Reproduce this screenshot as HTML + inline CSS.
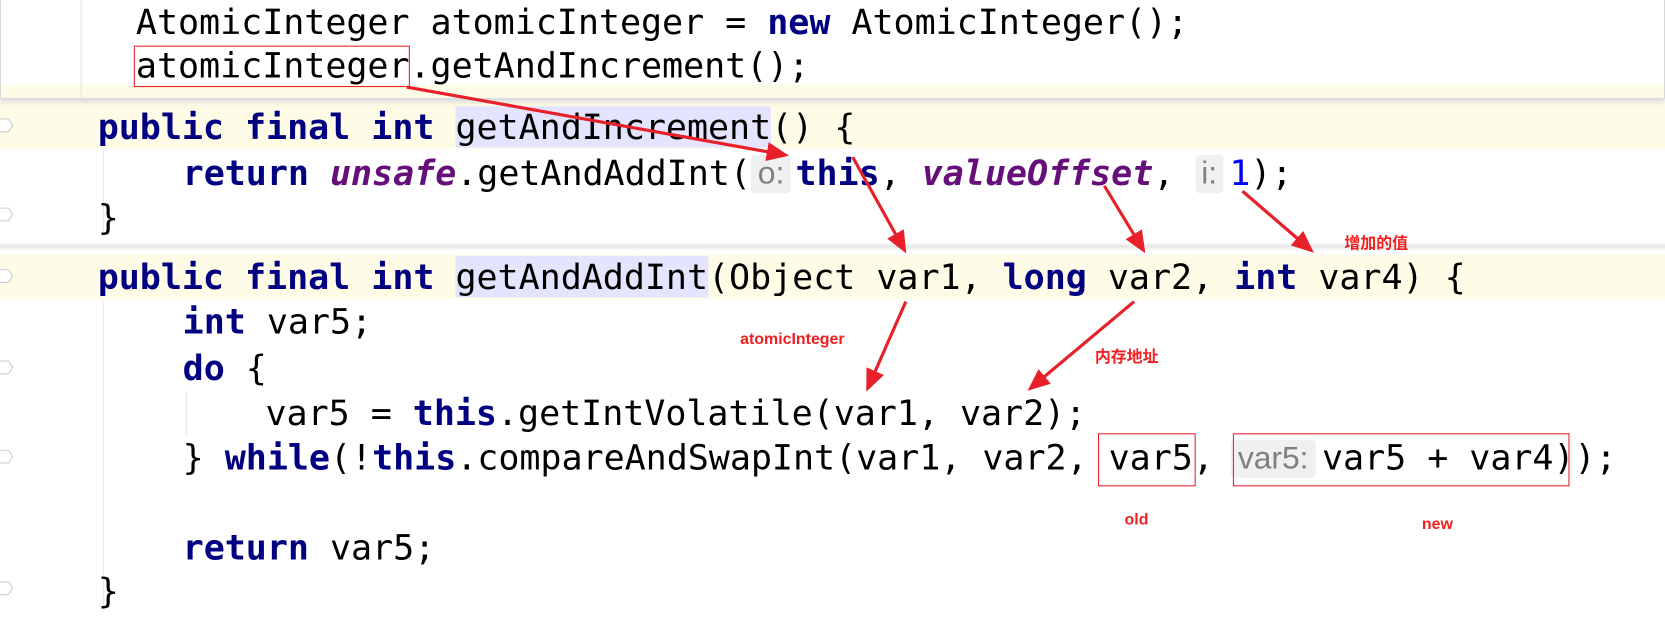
<!DOCTYPE html>
<html><head><meta charset="utf-8"><style>
html,body{margin:0;padding:0;background:#fff;overflow:hidden}
#root{position:relative;width:1568px;height:585px;transform:scale(1.0619);transform-origin:0 0;background:#fff}
.l{position:absolute;white-space:pre;font-family:"DejaVu Sans Mono","Liberation Mono",monospace;font-size:33px;line-height:42px;color:#000;letter-spacing:-0.05px}
.k{color:#000080;font-weight:bold}
.p{color:#660e7a;font-weight:bold;font-style:italic}
.n{color:#0000ff}
.h{display:inline-block;background:#f0f0f0;color:#808080;font-family:"Liberation Sans",sans-serif;font-size:30px;line-height:36px;border-radius:4px;text-align:center;vertical-align:1px}
.y{position:absolute;left:0;width:1568px;background:#fefbe6}
.hl{background:#e4e4ff}
.rb{position:absolute;border:1.5px solid #e8202a}
.a{position:absolute;color:#f02020;font-weight:bold;font-size:15px;font-family:"Liberation Sans","Noto Sans CJK SC",sans-serif;white-space:nowrap}
</style></head><body><div id="root">
<div class="y" style="top:96px;height:44px"></div>
<div class="y" style="top:240px;height:42px"></div>
<div style="position:absolute;left:0;top:228px;width:1568px;height:8px;background:linear-gradient(#fff,#e6e6e6,#fff)"></div>
<div style="position:absolute;left:97px;top:142px;width:1px;height:80px;background:#e8e8e8"></div>
<div style="position:absolute;left:97px;top:284px;width:1px;height:290px;background:#e8e8e8"></div>
<div style="position:absolute;left:175px;top:368px;width:1px;height:42px;background:#e8e8e8"></div>
<div style="position:absolute;left:0;top:0;width:1566px;height:92px;background:#fff;border:1px solid #d8d8d8;border-top:none;box-shadow:0 3px 4px rgba(0,0,0,0.15)">
<div style="position:absolute;left:0;top:80px;width:1566px;height:12px;background:#fefbe6"></div>
<div style="position:absolute;left:75px;top:0;width:1px;height:92px;background:#e4e4e4"></div>
</div>
<div class="l" style="left:128px;top:0px">AtomicInteger atomicInteger = <span class="k">new</span> AtomicInteger();</div>
<div class="l" style="left:128px;top:41px">atomicInteger.getAndIncrement();</div>
<div class="rb" style="left:126px;top:43px;width:258px;height:37px"></div>

<div class="l" style="left:92px;top:99px"><span class="k">public final int</span> <span class="hl">getAndIncrement</span>() {</div>
<div class="l" style="left:172px;top:142px"><span class="k">return</span> <span class="p">unsafe</span>.getAndAddInt(<span class="h" style="width:38px;margin-right:4px">o:</span><span class="k">this</span>, <span class="p">valueOffset</span>, <span class="h" style="width:26px;margin-right:6px">i:</span><span class="n">1</span>);</div>
<div class="l" style="left:92px;top:184px">}</div>

<div class="l" style="left:92px;top:240px"><span class="k">public final int</span> <span class="hl">getAndAddInt</span>(Object var1, <span class="k">long</span> var2, <span class="k">int</span> var4) {</div>
<div class="l" style="left:172px;top:282px"><span class="k">int</span> var5;</div>
<div class="l" style="left:172px;top:326px"><span class="k">do</span> {</div>
<div class="l" style="left:250px;top:368px">var5 = <span class="k">this</span>.getIntVolatile(var1, var2);</div>
<div class="l" style="left:172px;top:410px">} <span class="k">while</span>(!<span class="k">this</span>.compareAndSwapInt(var1, var2, var5, <span class="h" style="width:80px;margin-right:6px;margin-left:-4px">var5:</span>var5 + var4));</div>
<div class="l" style="left:172px;top:495px"><span class="k">return</span> var5;</div>
<div class="l" style="left:92px;top:536px">}</div>

<div class="rb" style="left:1034px;top:408px;width:90px;height:48px"></div>
<div class="rb" style="left:1161px;top:408px;width:315px;height:48px"></div>

<div class="a" style="left:1266px;top:218px">增加的值</div>
<div class="a" style="left:697px;top:311px">atomicInteger</div>
<div class="a" style="left:1031px;top:325px">内存地址</div>
<div class="a" style="left:1059px;top:481px">old</div>
<div class="a" style="left:1339px;top:485px">new</div>

<svg style="position:absolute;left:0;top:0" width="1568" height="585">
<defs><marker id="m" markerWidth="7" markerHeight="6" refX="6" refY="3" orient="auto" markerUnits="strokeWidth"><path d="M0,0 L7,3 L0,6 z" fill="#e8202a"/></marker></defs>
<g stroke="#e8202a" stroke-width="3" fill="none" marker-end="url(#m)">
<line x1="383" y1="82" x2="740" y2="146"/>
<line x1="803" y1="148" x2="852" y2="236"/>
<line x1="1040" y1="175" x2="1077" y2="236"/>
<line x1="1170" y1="180" x2="1235" y2="236"/>
<line x1="853" y1="284" x2="817" y2="366"/>
<line x1="1068" y1="284" x2="970" y2="366"/>
</g>
<g stroke="#ccc" fill="#fff" stroke-width="1">
<path d="M0,112 L8,112 L12,118 L8,124 L0,124"/>
<path d="M0,196 L8,196 L12,202 L8,208 L0,208"/>
<path d="M0,254 L8,254 L12,260 L8,266 L0,266"/>
<path d="M0,340 L8,340 L12,346 L8,352 L0,352"/>
<path d="M0,424 L8,424 L12,430 L8,436 L0,436"/>
<path d="M0,548 L8,548 L12,554 L8,560 L0,560"/>
</g>
</svg>
</div></body></html>
